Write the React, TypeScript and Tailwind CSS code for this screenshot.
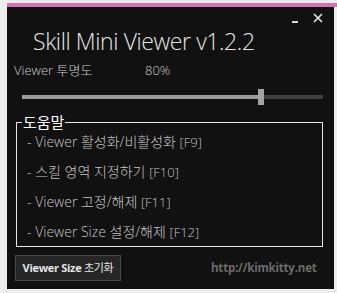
import React from 'react'

const helpItems = [
  { text: 'Viewer 활성화/비활성화', key: '[F9]' },
  { text: '스킬 영역 지정하기', key: '[F10]' },
  { text: 'Viewer 고정/해제', key: '[F11]' },
  { text: 'Viewer Size 설정/해제', key: '[F12]' },
]

export default function App() {
  return (
    <div className="w-[337px] h-[293px] bg-[#eeeeee] pl-[7px] pr-[3px] pt-[3px] pb-[4px] flex flex-col font-['Open_Sans','Noto_Sans_CJK_KR',sans-serif]">
      <div className="h-[4px] bg-[#d672b2] -mr-[3px]" />
      <div className="relative flex-1 bg-[#111111] flex flex-col">
        {/* window buttons */}
        <div className="absolute top-[6px] right-[11px] flex items-end gap-[15px]">
          <svg width="6" height="10" viewBox="0 0 6 10">
            <rect x="0" y="8" width="6" height="2" fill="#d8d8d8" />
          </svg>
          <svg width="10" height="10" viewBox="0 0 10 10">
            <path d="M1 1L9 9M9 1L1 9" stroke="#e8e8e8" strokeWidth="1.6" />
          </svg>
        </div>

        <h1 className="pl-[26px] pt-[20px] text-[23px] leading-[28px] font-light tracking-[-0.4px] text-[#e6e6e6]">
          Skill Mini Viewer v1.2.2
        </h1>

        <div className="mt-[7px] pl-[7px] flex text-[13px] leading-[16px] text-[#cfcfcf] font-light">
          <span className="w-[131px]">Viewer 투명도</span>
          <span>80%</span>
        </div>

        {/* slider */}
        <div className="mt-[11px] ml-[15px] mr-[11px] h-[16px] flex items-center">
          <div className="w-[236px] h-[4px] bg-[#9b9b9b]" />
          <div className="w-[6px] h-[16px] bg-[#a3a3a3]" />
          <div className="flex-1 h-[4px] bg-[#3f3f3f]" />
        </div>

        <fieldset className="mt-[8px] ml-[9px] mr-[11px] border border-[#e6e6e6] pb-[3px]">
          <legend className="ml-[5px] px-[1px] text-[15px] leading-[18px] text-white">도움말</legend>
          <ul className="pl-[10px] flex flex-col gap-[8px]">
            {helpItems.map((item) => (
              <li key={item.key} className="text-[14px] leading-[22px] text-[#c4c4c4] font-light">
                - {item.text} <span className="text-[13px]">{item.key}</span>
              </li>
            ))}
          </ul>
        </fieldset>

        <div className="mt-[8px] ml-[8px] flex items-center">
          <button className="w-[106px] h-[26px] bg-[#262626] border border-[#4a4a4a] text-[11px] font-bold text-[#e4e4e4] tracking-[-0.3px] whitespace-nowrap">
            Viewer Size <span className="font-normal">초기화</span>
          </button>
          <span className="ml-[90px] text-[11.5px] font-bold text-[#6b6b6b] tracking-[-0.2px]">http://kimkitty.net</span>
        </div>
      </div>
    </div>
  )
}
